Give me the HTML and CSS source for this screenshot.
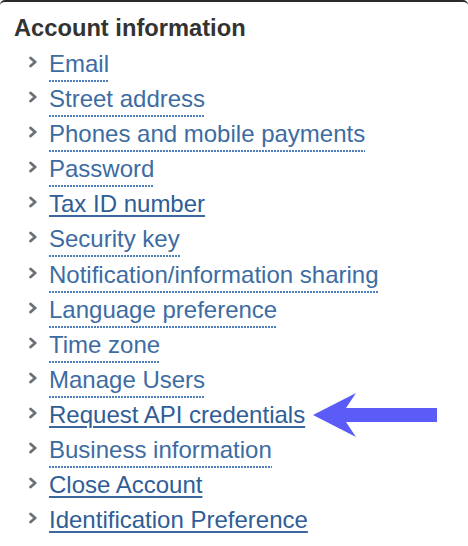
FILE: index.html
```html
<!DOCTYPE html>
<html>
<head>
<meta charset="utf-8">
<link rel="stylesheet" href="styles.css">
</head>
<body>
<div class="panel">
  <h2 class="title">Account information</h2>
  <ul class="menu">
    <li class="item"><svg class="bullet" viewBox="0 0 8 12"><polyline points="1.6,2 6.2,6 1.6,10"/></svg><a class="link dotted">Email</a></li>
    <li class="item"><svg class="bullet" viewBox="0 0 8 12"><polyline points="1.6,2 6.2,6 1.6,10"/></svg><a class="link dotted">Street address</a></li>
    <li class="item"><svg class="bullet" viewBox="0 0 8 12"><polyline points="1.6,2 6.2,6 1.6,10"/></svg><a class="link dotted">Phones and mobile payments</a></li>
    <li class="item"><svg class="bullet" viewBox="0 0 8 12"><polyline points="1.6,2 6.2,6 1.6,10"/></svg><a class="link dotted">Password</a></li>
    <li class="item"><svg class="bullet" viewBox="0 0 8 12"><polyline points="1.6,2 6.2,6 1.6,10"/></svg><a class="link solid">Tax ID number</a></li>
    <li class="item"><svg class="bullet" viewBox="0 0 8 12"><polyline points="1.6,2 6.2,6 1.6,10"/></svg><a class="link dotted">Security key</a></li>
    <li class="item"><svg class="bullet" viewBox="0 0 8 12"><polyline points="1.6,2 6.2,6 1.6,10"/></svg><a class="link dotted">Notification/information sharing</a></li>
    <li class="item"><svg class="bullet" viewBox="0 0 8 12"><polyline points="1.6,2 6.2,6 1.6,10"/></svg><a class="link dotted">Language preference</a></li>
    <li class="item"><svg class="bullet" viewBox="0 0 8 12"><polyline points="1.6,2 6.2,6 1.6,10"/></svg><a class="link dotted">Time zone</a></li>
    <li class="item"><svg class="bullet" viewBox="0 0 8 12"><polyline points="1.6,2 6.2,6 1.6,10"/></svg><a class="link dotted">Manage Users</a></li>
    <li class="item"><svg class="bullet" viewBox="0 0 8 12"><polyline points="1.6,2 6.2,6 1.6,10"/></svg><a class="link solid">Request API credentials</a></li>
    <li class="item"><svg class="bullet" viewBox="0 0 8 12"><polyline points="1.6,2 6.2,6 1.6,10"/></svg><a class="link dotted">Business information</a></li>
    <li class="item"><svg class="bullet" viewBox="0 0 8 12"><polyline points="1.6,2 6.2,6 1.6,10"/></svg><a class="link solid">Close Account</a></li>
    <li class="item"><svg class="bullet" viewBox="0 0 8 12"><polyline points="1.6,2 6.2,6 1.6,10"/></svg><a class="link solid">Identification Preference</a></li>
  </ul>
  <svg class="arrow" viewBox="0 0 468 546" width="468" height="546">
    <path d="M313,415 L356,393 L346,408 L437,408 L437,422 L346,422 L356,437 Z"/>
  </svg>
</div>
</body>
</html>
```

FILE: styles.css
```css
html, body {
  margin: 0;
  padding: 0;
  background: #ffffff;
}

.panel {
  position: relative;
  width: 468px;
  height: 546px;
  box-sizing: border-box;
  border-top: 2px solid #2b2b2b;
  border-radius: 5px 5px 0 0;
  padding: 12px 0 0 14px;
  font-family: "Liberation Sans", Arial, Helvetica, sans-serif;
  overflow: hidden;
}

.title {
  margin: 0 0 4px 0;
  font-size: 23.7px;
  line-height: 28px;
  font-weight: bold;
  color: #333333;
}

.menu {
  list-style: none;
  margin: 0;
  padding: 0 0 0 15px;
}

.item {
  display: flex;
  align-items: flex-start;
  height: 35.1px;
  line-height: 35px;
  font-size: 24px;
}

.bullet {
  width: 8px;
  height: 12px;
  margin-top: 10px;
  margin-right: 12px;
  flex: none;
}

.bullet polyline {
  fill: none;
  stroke: #6a7077;
  stroke-width: 2.8;
  stroke-linecap: round;
  stroke-linejoin: round;
}

.link {
  color: #3d6ca3;
  text-decoration: none;
}

.dotted {
  padding-bottom: 1px;
  background-image: repeating-linear-gradient(90deg, #4f7fbb 0 2px, transparent 2px 3px);
  background-size: 100% 2px;
  background-position: left bottom;
  background-repeat: no-repeat;
}

.solid {
  color: #2f5d96;
  text-decoration: underline;
  text-decoration-thickness: 2px;
  text-underline-offset: 3px;
  text-decoration-color: #3a67a0;
}

.arrow {
  position: absolute;
  left: 0;
  top: -2px;
  pointer-events: none;
}

.arrow path {
  fill: #5b5bf7;
}
```
